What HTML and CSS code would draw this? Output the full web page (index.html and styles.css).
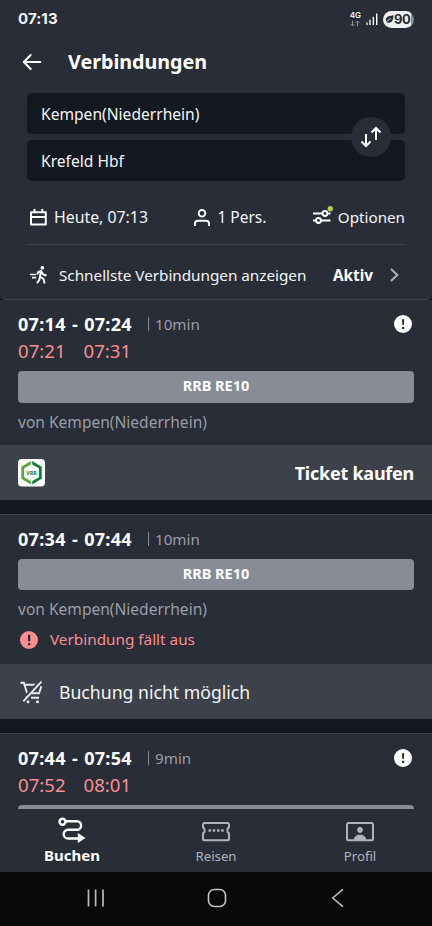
FILE: index.html
```html
<!DOCTYPE html>
<html lang="de">
<head>
<meta charset="utf-8">
<title>Verbindungen</title>
<link rel="stylesheet" href="styles.css">
</head>
<body>
<div class="phone">
  <header class="header">
    <div class="status">
      <span class="clock">07:13</span>
      <div class="status-icons">
        <div class="network">
          <span class="network-type">4G</span>
          <svg width="10" height="7" viewBox="0 0 10 7" fill="none" stroke="#8b8f98" stroke-width="1"><path d="M2.500 .5v5.500M.5 4l2 2 2-2M7.500 6.500V1M5.500 3l2-2 2 2"/></svg>
        </div>
        <svg class="signal" width="12" height="12" viewBox="0 0 12 12" fill="#fff"><path d="M.3 9.500h1.300V12H.3zM3.300 6.800h1.300V12H3.300zM6.700 3.700H8V12H6.700zM10 .5h1.400V12H10z"/></svg>
        <div class="battery">
          <svg width="9" height="9" viewBox="0 0 9 9"><path d="M8.800.3C5 .8 1.500 1.200.900 4.300.600 5.700 1.300 6.900 2.100 7.500 5.500 8.300 7.800 6.500 8.100 3.700 8.200 2.400 8.300 1.200 8.800.3z" fill="#282d37"/><path d="M.5 8.500C2 5.800 3.700 4.500 5.700 3.500" stroke="#eeeff1" stroke-width="1" fill="none"/></svg>
          <span>90</span>
        </div>
      </div>
    </div>

    <div class="title-row">
      <svg width="20" height="18" viewBox="0 0 20 18" fill="none" stroke="#fff" stroke-width="2" stroke-linecap="round" stroke-linejoin="round"><path d="M18.300 9H2M8.700 2 1.800 9l6.900 7"/></svg>
      <h1>Verbindungen</h1>
    </div>

    <div class="route">
      <div class="field">Kempen(Niederrhein)</div>
      <div class="field">Krefeld Hbf</div>
      <div class="swap">
        <svg width="22" height="22" viewBox="0 0 22 22" fill="none" stroke="#fff" stroke-width="2"><path d="M6 8v12M1.500 15.500 6 20l4.500-4.500M16 14V2M11.500 6.500 16 2l4.500 4.500"/></svg>
      </div>
    </div>

    <div class="filters">
      <div class="filter">
        <svg width="17" height="17" viewBox="0 0 17 17" fill="none" stroke="#fff"><path d="M1 3.300h14.800V15.500H1zM1 8h14.800" stroke-width="2" stroke-linejoin="round"/><path d="M4.500 0v4M12.300 0v4" stroke-width="2"/></svg>
        <span class="date">Heute, 07:13</span>
      </div>
      <div class="filter">
        <svg width="16" height="17" viewBox="0 0 16 17" fill="none" stroke="#fff" stroke-width="1.900"><circle cx="8" cy="4.300" r="3.300"/><path d="M1 17v-2.500c0-1.700 1.300-2.800 3-2.800h8c1.700 0 3 1.100 3 2.800V17"/></svg>
        <span class="persons">1 Pers.</span>
      </div>
      <div class="filter options">
        <svg width="19" height="18" viewBox="0 0 19 18" fill="none" stroke="#fff" stroke-width="2"><path d="M0 5.500h9.500M14.500 5.500h3M0 12.500h3M8 12.500h9.500"/><circle cx="12" cy="5.500" r="2.400"/><circle cx="5.500" cy="12.500" r="2.400"/><circle cx="17.300" cy=".8" r="2.700" fill="#a9d05f" stroke="none"/></svg>
        <span>Optionen</span>
      </div>
    </div>

    <div class="fastest">
      <svg width="17" height="18" viewBox="0 0 17 18" fill="none" stroke="#fff" stroke-width="1.900" stroke-linejoin="round"><circle cx="12.300" cy="1.900" r="1.800" fill="#fff" stroke="none"/><path d="M0 8.500h6M2 11.700h4.200" stroke-width="1.700"/><path d="M7.300 8.600 8.200 6l3-1 2 3.500 3.300 1M11 5.500l-1 5 3.500 2.500 1.200 4.500M10 10.500l-.8 3.700-2.300 3"/></svg>
      <span class="fastest-label">Schnellste Verbindungen anzeigen</span>
      <strong>Aktiv</strong>
      <svg class="chevron" width="9" height="14" viewBox="0 0 9 14" fill="none" stroke="#afb4bb" stroke-width="2"><path d="m1 1 6.300 6L1 13"/></svg>
    </div>
  </header>

  <main class="list">
    <section class="card first">
      <div class="body">
        <div class="times"><strong>07:14 - 07:24</strong><i></i><span>10min</span>
          <svg class="notice" width="18" height="18" viewBox="0 0 18 18"><circle cx="9" cy="9" r="9" fill="#fff"/><path d="M8 4.300h2.200l-.3 5.700H8.300zM8 11.700h2.200v2.200H8z" fill="#282d37"/></svg>
        </div>
        <div class="delays"><span>07:21</span><span>07:31</span></div>
        <div class="train">RRB RE10</div>
        <div class="origin">von Kempen(Niederrhein)</div>
      </div>
      <div class="action buy">
        <svg width="27" height="28" viewBox="0 0 27 28"><rect width="27" height="27.500" rx="4" fill="#fff"/><path d="M12.900 2v3.400L6.200 9.300v8.900l6.700 3.900v3.400L3.300 19.700V7.700z" fill="#5aa83c"/><path d="M14.200 2v3.400l6.700 3.900v8.900l-6.700 3.900v3.400l9.600-5.800v-12z" fill="#16813f"/><text x="13.600" y="15.800" text-anchor="middle" class="vrr">VRR</text></svg>
        <strong>Ticket kaufen</strong>
      </div>
    </section>

    <section class="card second">
      <div class="body">
        <div class="times"><strong>07:34 - 07:44</strong><i></i><span>10min</span></div>
        <div class="train">RRB RE10</div>
        <div class="origin">von Kempen(Niederrhein)</div>
        <div class="cancelled">
          <svg width="18" height="18" viewBox="0 0 18 18"><circle cx="9" cy="9" r="9" fill="#f98d90"/><path d="M8 3.800h2.200v6.400H8zM8 12h2.200v2.300H8z" fill="#282d37"/></svg>
          <span>Verbindung fällt aus</span>
        </div>
      </div>
      <div class="action blocked">
        <svg width="24" height="24" viewBox="0 0 24 24" fill="none" stroke="#e9ebee" stroke-width="1.900"><path d="M.5 2.700h3.300L7.300 13.700M4.500 4.700h14M21.300 6.300l-2.200 6.900h-8M7.300 13.700l-1.700 4M11 17.700h8"/><path d="M20 .5 1.500 20" stroke="#3c414b"/><path d="M21.500 1.700 3.300 21.300"/><circle cx="8" cy="21.700" r="1.500" fill="#e9ebee" stroke="none"/><circle cx="17.500" cy="21.700" r="1.500" fill="#e9ebee" stroke="none"/></svg>
        <span>Buchung nicht möglich</span>
      </div>
    </section>

    <section class="card third">
      <div class="body">
        <div class="times"><strong>07:44 - 07:54</strong><i></i><span>9min</span>
          <svg class="notice" width="18" height="18" viewBox="0 0 18 18"><circle cx="9" cy="9" r="9" fill="#fff"/><path d="M8 4.300h2.200l-.3 5.700H8.300zM8 11.700h2.200v2.200H8z" fill="#282d37"/></svg>
        </div>
        <div class="delays"><span>07:52</span><span>08:01</span></div>
        <div class="train"></div>
      </div>
    </section>
  </main>

  <nav class="tabs">
    <div class="tab active">
      <svg width="28" height="26" viewBox="0 0 28 26" fill="none" stroke="#fff" stroke-width="2.400"><circle cx="4.500" cy="4.700" r="3"/><path d="M7.500 4.200h11.300a4.300 4.300 0 0 1 0 8.600H10a4.300 4.300 0 0 0 0 8.700h11"/><path d="M19.800 16v10l7.700-5z" fill="#fff" stroke="none"/></svg>
      <span>Buchen</span>
    </div>
    <div class="tab">
      <svg width="28" height="26" viewBox="0 0 28 26" fill="none" stroke="#afb4bb" stroke-width="2"><path d="M2.500 6h23a1.500 1.500 0 0 1 1.500 1.500v2.800l-1.500 1.600v3l1.500 1.600v5.200a1.500 1.500 0 0 1-1.500 1.500h-23A1.500 1.500 0 0 1 1 21.700v-5.200l1.500-1.600v-3L1 10.300V7.500A1.500 1.500 0 0 1 2.500 6z"/><path d="M6.500 13.500h2.500M10.700 13.500h2.500M15 13.500h2.500M19.200 13.500h2.500" stroke-width="2.500"/></svg>
      <span>Reisen</span>
    </div>
    <div class="tab">
      <svg width="28" height="26" viewBox="0 0 28 26" fill="none" stroke="#afb4bb" stroke-width="2"><rect x="1" y="6" width="26" height="17.300" rx="1.500"/><circle cx="14" cy="12.900" r="2.800" fill="#afb4bb" stroke="none"/><path d="M7.800 23c0-3.300 2.700-5.300 6.200-5.300s6.200 2 6.200 5.300z" fill="#afb4bb" stroke="none"/></svg>
      <span>Profil</span>
    </div>
  </nav>

  <div class="system">
    <svg width="18" height="18" viewBox="0 0 18 18" stroke="#b9babc" stroke-width="1.700"><path d="M1.500.5v17M8.600.5v17M16 .5v17"/></svg>
    <svg width="20" height="20" viewBox="0 0 20 20" fill="none" stroke="#c4c5c7" stroke-width="1.600"><rect x=".5" y="1.500" width="17" height="17" rx="5.800"/></svg>
    <svg width="14" height="20" viewBox="0 0 14 20" fill="none" stroke="#b9babc" stroke-width="1.600"><path d="M13 1.300 2.700 10l10.300 8.700"/></svg>
  </div>
</div>
</body>
</html>
```
FILE: styles.css
```css
* { box-sizing: border-box; }

body {
  margin: 0;
  background: #131821;
  font-family: "Noto Sans", sans-serif;
  color: #f4f5f7;
}

svg { display: block; flex: none; overflow: visible; }

.phone {
  width: 432px;
  height: 926px;
  display: flex;
  flex-direction: column;
  overflow: hidden;
}

.header {
  flex: none;
  height: 300px;
  background: #282d37;
  border-bottom: 1px solid #3c414b;
  border-radius: 0 0 5px 5px;
}

.status {
  height: 38px;
  padding: 0 18px;
  display: flex;
  align-items: center;
  justify-content: space-between;
}

.clock { font: 700 15px/20px Inter, sans-serif; letter-spacing: 0.1px; }

.status-icons { display: flex; align-items: center; }

.network { display: flex; flex-direction: column; align-items: center; gap: 1px; }
.network-type { font: 600 8px/7px Inter, sans-serif; }

.signal { margin: 0 5px; }

.battery {
  width: 31px;
  height: 17px;
  padding-left: 2px;
  display: flex;
  align-items: center;
  border-radius: 9px;
  background: linear-gradient(90deg, #eeeff1 28px, #8b8f98 28px);
  color: #282d37;
  font: 700 13px/17px Inter, sans-serif;
  letter-spacing: -0.5px;
}

.title-row {
  height: 48px;
  padding-left: 22px;
  display: flex;
  align-items: center;
  gap: 26px;
}

h1 { margin: 0; font-size: 19.7px; line-height: 28px; color: #fff; }

.route {
  position: relative;
  margin: 7px 27px 0;
  display: grid;
  gap: 6px;
}

.field {
  height: 41px;
  padding-left: 14px;
  border-radius: 5px;
  background: #131821;
  font-size: 15.6px;
  line-height: 42px;
}

.swap {
  position: absolute;
  right: 14px;
  top: 24px;
  width: 40px;
  height: 40px;
  display: grid;
  place-items: center;
  border-radius: 50%;
  background: #282d37;
}

.filters {
  height: 64px;
  margin: 0 27px;
  padding: 9px 0 0 3px;
  display: flex;
  align-items: center;
  justify-content: space-between;
  border-bottom: 1px solid #3c414b;
}

.filter { display: flex; align-items: center; gap: 7px; font-size: 15.5px; line-height: 24px; }
.date { font-size: 15.85px; }
.options { gap: 6px; font-size: 15.2px; }

.fastest {
  height: 54px;
  padding: 6px 33px 0 30px;
  display: flex;
  align-items: center;
  font-size: 15.3px;
  line-height: 24px;
}

.fastest-label { margin-left: 12px; letter-spacing: -0.03px; white-space: nowrap; }
.fastest strong { margin-left: auto; color: #fff; }
.chevron { margin-left: 17px; }

.list {
  flex: none;
  height: 509px;
  overflow: hidden;
  background: #131821;
}

.card { background: #282d37; }
.body { padding: 11px 18px 0; }
.first .body { height: 145px; }

.second, .third { margin-top: 14px; border-top: 1px solid #3c414b; }
.second .body { height: 149px; }
.third .body { height: 100px; }

.times {
  height: 26px;
  display: flex;
  align-items: center;
  font-size: 15.2px;
  line-height: 26px;
  color: #9a9ea7;
}

.times strong {
  width: 130px;
  color: #fff;
  font-size: 18px;
  letter-spacing: 0.3px;
  word-spacing: 1.2px;
  white-space: nowrap;
}

.times i { width: 1px; height: 14px; margin-right: 6px; background: #878c96; }
.notice { margin: 0 2px 0 auto; }

.delays {
  height: 28px;
  display: flex;
  gap: 18px;
  color: #f98d90;
  font-size: 18.6px;
  line-height: 27px;
}

.train {
  height: 32px;
  margin-top: 6px;
  border-radius: 4px;
  background: #878c96;
  color: #fff;
  text-align: center;
  font-weight: 700;
  font-size: 14.5px;
  line-height: 29px;
}

.second .train { height: 31px; margin-top: 7px; line-height: 28px; }

.origin { height: 39px; font-size: 15.55px; line-height: 39px; color: #9a9ea7; }

.cancelled {
  height: 21px;
  padding-left: 2px;
  display: flex;
  align-items: center;
  gap: 12px;
  color: #f98d90;
  font-size: 15.3px;
  line-height: 21px;
}

.action {
  height: 55px;
  padding: 0 18px;
  display: flex;
  align-items: center;
  background: #3c414b;
}

.buy { justify-content: space-between; }
.buy strong { color: #fff; font-size: 18px; line-height: 24px; letter-spacing: -0.25px; }
.vrr { font: 700 5.5px "Noto Sans", sans-serif; fill: #16813f; }

.blocked { padding-left: 20px; gap: 15px; font-size: 17.65px; line-height: 24px; }

.tabs {
  flex: none;
  height: 63px;
  display: grid;
  grid-template-columns: repeat(3, 144px);
  background: #282d37;
}

.tab {
  padding-top: 8px;
  display: flex;
  flex-direction: column;
  align-items: center;
  gap: 4px;
  color: #afb4bb;
  font-size: 13.2px;
  line-height: 18px;
}

.active { color: #fff; font-weight: 700; font-size: 15px; line-height: 17px; }

.system {
  flex: 1;
  padding: 0 88px 2px 87px;
  display: flex;
  align-items: center;
  justify-content: space-between;
  background: #08090b;
}
```
